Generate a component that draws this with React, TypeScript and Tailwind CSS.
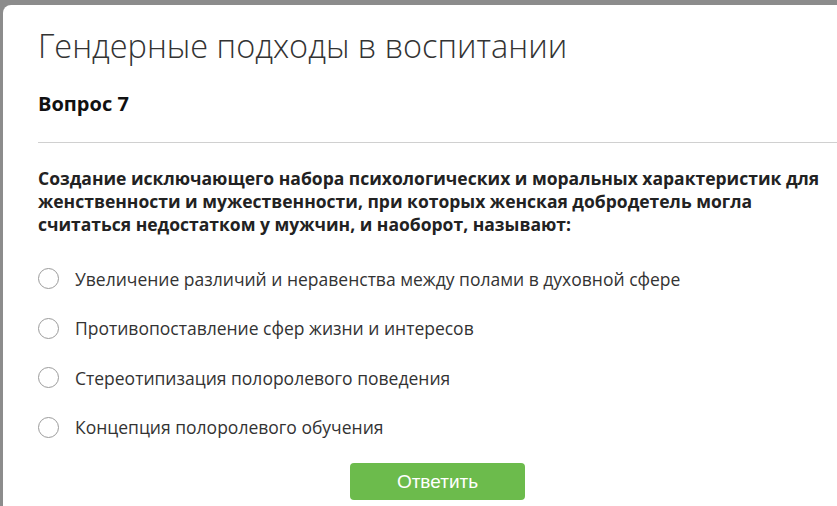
import React from 'react';

const options = [
  'Увеличение различий и неравенства между полами в духовной сфере',
  'Противопоставление сфер жизни и интересов',
  'Стереотипизация полоролевого поведения',
  'Концепция полоролевого обучения',
];

function Option({ label }: { label: string }) {
  return (
    <label className="flex h-[49.5px] cursor-pointer items-center gap-[16px]">
      <span className="h-[21px] w-[21px] shrink-0 rounded-full border-[1.5px] border-[#9b9b9b] bg-white" />
      <span className="text-[17.5px] leading-[24px] text-[#333]">{label}</span>
    </label>
  );
}

export default function App() {
  return (
    <div className="h-[506px] w-[837px] overflow-hidden bg-[#8c8c8c] pl-[3px] pt-[5px]">
      <div
        className="h-[600px] w-[869px] rounded-tl-[8px] bg-white px-[35px] pt-[19px]"
        style={{ fontFamily: '"Open Sans", "Liberation Sans", sans-serif' }}
      >
        <h1 className="text-[32.5px] leading-[44px] font-light text-[#333]">Гендерные подходы в воспитании</h1>
        <h2 className="mt-[22px] text-[20px] leading-[27px] font-bold text-[#111]">Вопрос 7</h2>

        <div className="mt-[25px] border-t border-[#d0d0d0]" />

        <p className="mt-[24px] text-[17.5px] font-bold leading-[23px] text-[#222]">
          Создание исключающего набора психологических и моральных характеристик для женственности и
          мужественности, при которых женская добродетель могла считаться недостатком у мужчин, и наоборот,
          называют:
        </p>

        <div className="mt-[18px] flex flex-col">
          {options.map((o) => (
            <Option key={o} label={o} />
          ))}
        </div>

        <div className="mt-[11px] flex justify-center">
          <button
            className="h-[37px] w-[175px] rounded-[4px] bg-[#6cbb4c] text-[19px] leading-[37px] text-white"
            style={{ fontFamily: '"Liberation Sans", Arial, sans-serif' }}
          >
            Ответить
          </button>
        </div>
      </div>
    </div>
  );
}
